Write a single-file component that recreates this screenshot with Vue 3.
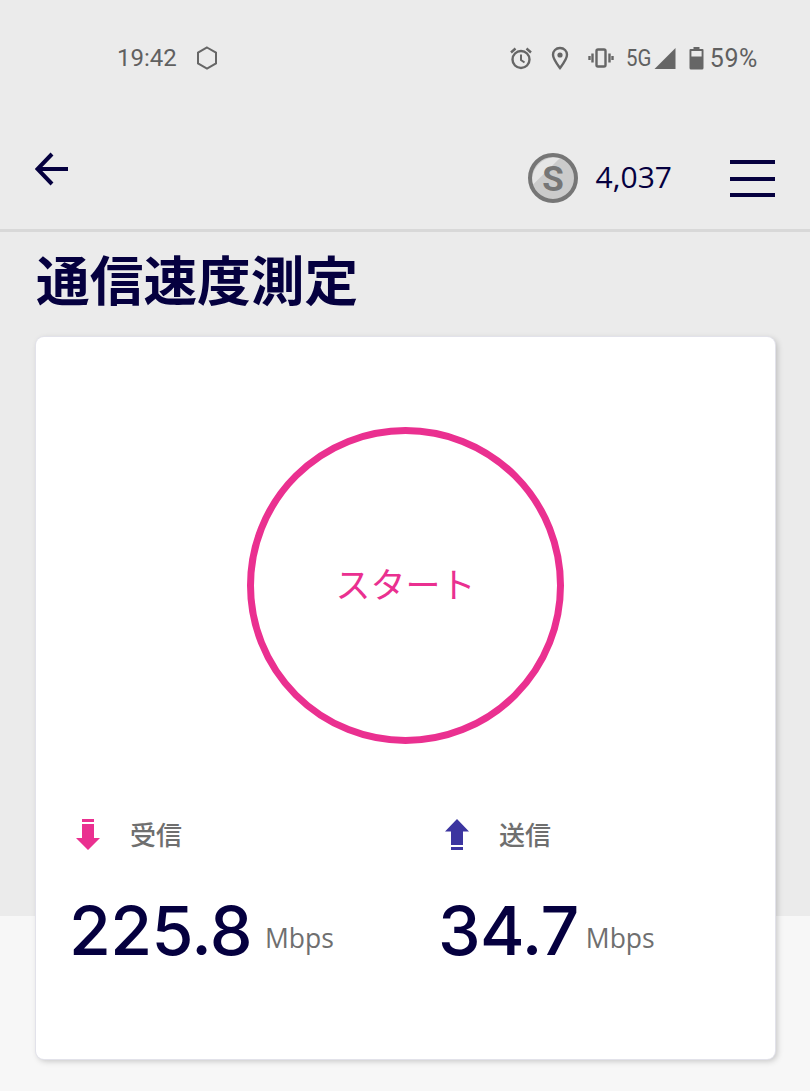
<template>
  <div class="speed-view">
    <!-- Status bar -->
    <div class="status-bar">
      <div class="status-left">
        <span class="clock">19:42</span>
        <svg class="hexagon" width="22" height="24" viewBox="0 0 22 24" fill="none">
          <path d="M11 1.5L20 6.7V17.3L11 22.5L2 17.3V6.7Z" stroke="#666" stroke-width="2"/>
        </svg>
      </div>
      <div class="status-right">
        <svg width="24" height="26" viewBox="0 0 24 26" fill="none" stroke="#666" stroke-width="2.4">
          <circle cx="12" cy="14.5" r="8.5"/>
          <path d="M12 9.5V15L15.5 17.5" stroke-width="2"/>
          <path d="M2 7.5L6.5 3.5M22 7.5L17.5 3.5"/>
        </svg>
        <svg class="pin" width="20" height="26" viewBox="0 0 20 26" fill="none">
          <path d="M10 3C5.8 3 3 6 3 9.8C3 14 7 19 10 23C13 19 17 14 17 9.8C17 6 14.2 3 10 3Z" stroke="#666" stroke-width="2.4"/>
          <circle cx="10" cy="10" r="2.6" fill="#666"/>
        </svg>
        <svg class="vibrate" width="26" height="26" viewBox="0 0 26 26" fill="none" stroke="#666" stroke-width="2.4">
          <rect x="8.5" y="4.5" width="9" height="17" rx="1.5"/>
          <path d="M4.5 8.5V17.5M1.5 11V15M21.5 8.5V17.5M24.5 11V15"/>
        </svg>
        <span class="network">5G</span>
        <svg class="signal" width="22" height="24" viewBox="0 0 22 24">
          <path d="M21.5 2V23H0.5Z" fill="#666"/>
        </svg>
        <svg class="battery" width="15" height="24" viewBox="0 0 15 24">
          <path d="M4.5 1H10.5V3H13.5Q14.5 3 14.5 4V22Q14.5 23.5 13 23.5H2Q0.5 23.5 0.5 22V4Q0.5 3 1.5 3H4.5Z" fill="#666"/>
          <rect x="2.4" y="5" width="10.2" height="5.5" fill="#ebebeb"/>
        </svg>
        <span class="battery-level">59%</span>
      </div>
    </div>

    <!-- Header -->
    <header class="app-header">
      <svg class="back-icon" width="34" height="34" viewBox="0 0 34 34" fill="none" stroke="#05003f" stroke-width="4">
        <path d="M33 17H3.5M17 2L2.5 17L17 32"/>
      </svg>
      <div class="points">
        <svg width="52" height="52" viewBox="0 0 52 52">
          <circle cx="26" cy="26" r="23" fill="#cbcbcb"/>
          <path d="M5.5 33L33 6A23 23 0 0 0 5.5 33Z" fill="#e6e6e6"/>
          <circle cx="26" cy="26" r="23" fill="none" stroke="#767676" stroke-width="4"/>
          <text x="26" y="38.5" text-anchor="middle" class="coin-letter">S</text>
        </svg>
        <span class="points-value">4,037</span>
      </div>
      <button class="menu-button">
        <span></span><span></span><span></span>
      </button>
    </header>

    <main class="content">
      <h1 class="page-title">通信速度測定</h1>

      <div class="card">
        <div class="start-circle"><span class="start-label">スタート</span></div>

        <div class="results">
          <div v-for="item in results" :key="item.label" class="result">
            <div class="result-label">
              <svg v-if="item.dir === 'down'" width="24" height="32" viewBox="0 0 24 32">
                <rect x="6" y="0" width="12" height="3" fill="#ea3090"/>
                <path d="M6 5H18V19H24L12 31L0 19H6Z" fill="#ea3090"/>
              </svg>
              <svg v-else width="24" height="32" viewBox="0 0 24 32">
                <path d="M12 0L24 12.5H18V26H6V12.5H0Z" fill="#3c35a0"/>
                <rect x="6" y="28" width="12" height="3" fill="#3c35a0"/>
              </svg>
              <span class="label-text">{{ item.label }}</span>
            </div>
            <div class="result-value">
              <span class="number">{{ item.value }}</span>
              <span class="unit">Mbps</span>
            </div>
          </div>
        </div>
      </div>
    </main>
  </div>
</template>

<script setup>
const results = [
  { label: '受信', value: '225.8', dir: 'down' },
  { label: '送信', value: '34.7', dir: 'up' }
]
</script>

<style>
html, body {
  margin: 0;
  background: #f7f7f7;
}
</style>

<style scoped>
.speed-view {
  height: 1091px;
  overflow: hidden;
  background: linear-gradient(#ebebeb 0, #ebebeb 916px, #f7f7f7 916px);
  font-family: "Noto Sans CJK JP", "Open Sans", sans-serif;
}

/* Status bar */
.status-bar {
  height: 115px;
  box-sizing: border-box;
  padding: 45px 52px 0 117px;
  display: flex;
  justify-content: space-between;
  align-items: flex-start;
  color: #606060;
  font-family: Roboto, sans-serif;
}

.status-left,
.status-right {
  display: flex;
  align-items: center;
  height: 26px;
}

.clock {
  font-size: 24px;
}

.hexagon {
  margin-left: 19px;
}

.pin {
  margin-left: 17px;
}

.vibrate {
  margin-left: 18px;
}

.network {
  margin-left: 12px;
  font-size: 24px;
  width: 27px;
  transform: scaleX(0.85);
  transform-origin: left center;
}

.signal {
  margin-left: 1px;
}

.battery {
  margin-left: 13px;
}

.battery-level {
  margin-left: 6px;
  font-size: 25px;
  letter-spacing: 0.6px;
}

/* Header */
.app-header {
  height: 117px;
  box-sizing: border-box;
  border-bottom: 3px solid #d8d8d8;
  padding: 0 35px;
  display: flex;
  align-items: flex-start;
}

.back-icon {
  margin-top: 37px;
}

.points {
  margin-left: auto;
  margin-top: 37px;
  display: flex;
  align-items: center;
  gap: 17px;
}

.coin-letter {
  font-family: Roboto, sans-serif;
  font-size: 35px;
  font-weight: 700;
  fill: #767676;
}

.points-value {
  padding-bottom: 3px;
  font-family: "Open Sans", sans-serif;
  font-size: 30px;
  color: #05003f;
}

.menu-button {
  margin: 45px 0 0 58px;
  padding: 0;
  width: 45px;
  height: 37px;
  border: 0;
  background: none;
  display: flex;
  flex-direction: column;
  justify-content: space-between;
}

.menu-button span {
  display: block;
  height: 4px;
  background: #05003f;
}

/* Content */
.content {
  padding: 0 35px 0 36px;
}

.page-title {
  margin: 10px 0 0;
  font-size: 53.7px;
  line-height: 72px;
  font-weight: 700;
  color: #05003f;
}

.card {
  margin-top: 23px;
  height: 722px;
  box-sizing: border-box;
  background: #fff;
  border-radius: 8px;
  box-shadow: 0 0 0 1px #e2e2ea, 2px 2px 6px rgba(0, 0, 0, 0.22);
  padding-top: 90px;
}

.start-circle {
  width: 317px;
  height: 317px;
  box-sizing: border-box;
  margin-left: 211px;
  border: 7px solid #ea3090;
  border-radius: 50%;
  display: flex;
  align-items: center;
  justify-content: center;
  color: #ea3090;
  font-size: 35px;
}

.start-label {
  padding-bottom: 6px;
}

.results {
  margin-top: 71px;
  padding-left: 36px;
  display: grid;
  grid-template-columns: 369px 1fr;
}

.result-label {
  display: flex;
  align-items: center;
  gap: 30px;
  padding-left: 4px;
  font-size: 26px;
  font-weight: 500;
  color: #6f6f6f;
}

.label-text {
  padding-bottom: 2px;
}

.result-value {
  margin-top: 31px;
  margin-left: -3px;
  white-space: nowrap;
}

.number {
  font-family: Inter, sans-serif;
  font-size: 68px;
  font-weight: 500;
  letter-spacing: -0.6px;
  line-height: 90px;
  color: #05003f;
}

.unit {
  margin-left: 13px;
  font-family: "Open Sans", sans-serif;
  font-size: 26.5px;
  color: #6f6f6f;
  vertical-align: 7.5px;
}

.result:last-child .unit {
  margin-left: 7px;
}
</style>
